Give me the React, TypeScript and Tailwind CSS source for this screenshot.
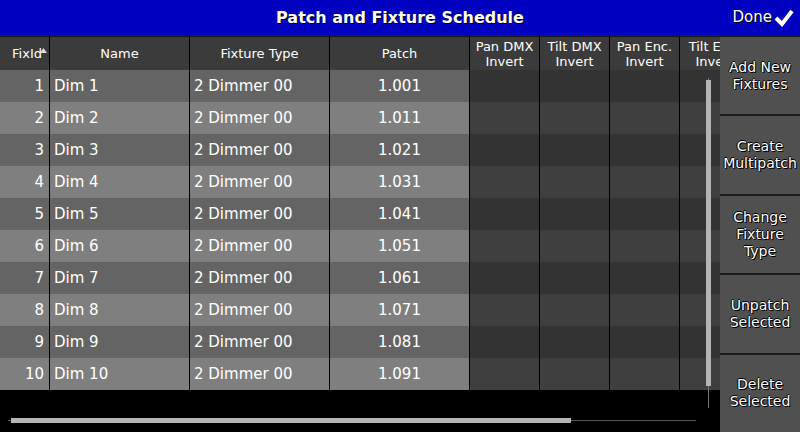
import React from 'react';

const rows = Array.from({ length: 10 }, (_, i) => ({
  id: i + 1,
  name: `Dim ${i + 1}`,
  type: '2 Dimmer 00',
  patch: `1.${String(i * 10 + 1).padStart(3, '0')}`,
}));

const buttons = [
  ['Add New', 'Fixtures'],
  ['Create', 'Multipatch'],
  ['Change', 'Fixture', 'Type'],
  ['Unpatch', 'Selected'],
  ['Delete', 'Selected'],
];

export default function App() {
  return (
    <div className="w-[800px] h-[432px] bg-black flex flex-col overflow-hidden text-white font-['DejaVu_Sans',sans-serif]">
      {/* Title bar */}
      <div className="h-[35px] bg-[#0000c0] flex items-center relative shrink-0">
        <div className="flex-1 text-center text-[16px] font-bold [text-shadow:1px_1px_0_#000]">
          Patch and Fixture Schedule
        </div>
        <div className="absolute right-[6px] top-0 h-full flex items-center gap-[2px] text-[15px] [text-shadow:1px_1px_0_#000]">
          <span>Done</span>
          <svg width="20" height="18" viewBox="0 0 20 18">
            <path d="M2 9 L8 15 L18 2" stroke="#fff" strokeWidth="4" fill="none" strokeLinejoin="miter" />
          </svg>
        </div>
      </div>
      <div className="h-[2px] bg-[#1a1a1a] shrink-0" />

      <div className="flex flex-1 min-h-0">
        {/* Table area */}
        <div className="w-[720px] flex flex-col relative overflow-hidden">
          {/* Header */}
          <div className="flex h-[33px] bg-[#3b3b3b] text-[13px] shrink-0">
            <div className="w-[50px] shrink-0 border-r border-black flex items-center justify-end pr-[7px] relative">
              FixId
              <svg className="absolute right-[2px] top-[11px]" width="7" height="5" viewBox="0 0 7 5">
                <path d="M0 5 L3.5 0 L7 5 Z" fill="#ddd" />
              </svg>
            </div>
            <div className="w-[140px] shrink-0 border-r border-black flex items-center justify-center">Name</div>
            <div className="w-[140px] shrink-0 border-r border-black flex items-center justify-center">Fixture Type</div>
            <div className="w-[140px] shrink-0 border-r border-black flex items-center justify-center">Patch</div>
            {['Pan DMX', 'Tilt DMX', 'Pan Enc.', 'Tilt Enc.'].map((h) => (
              <div key={h} className="w-[70px] shrink-0 border-r border-black flex flex-col items-center pt-[2px] leading-[15px] whitespace-nowrap">
                <span>{h}</span>
                <span>Invert</span>
              </div>
            ))}
          </div>

          {/* Rows */}
          {rows.map((r, i) => {
            const odd = i % 2 === 0;
            const light = odd ? 'bg-[#646464]' : 'bg-[#7f7f7f]';
            const dark = odd ? 'bg-[#333333]' : 'bg-[#3f3f3f]';
            return (
              <div key={r.id} className="flex h-[32px] text-[15px] shrink-0">
                <div className={`w-[50px] shrink-0 border-r border-black flex items-center justify-end pr-[5px] ${light}`}>{r.id}</div>
                <div className={`w-[140px] shrink-0 border-r border-black flex items-center pl-[4px] ${light}`}>{r.name}</div>
                <div className={`w-[140px] shrink-0 border-r border-black flex items-center pl-[4px] ${light}`}>{r.type}</div>
                <div className={`w-[140px] shrink-0 border-r border-black flex items-center justify-center ${light}`}>{r.patch}</div>
                {[0, 1, 2, 3].map((c) => (
                  <div key={c} className={`w-[70px] shrink-0 border-r border-black ${dark}`} />
                ))}
              </div>
            );
          })}

          {/* Horizontal scrollbar */}
          <div className="flex-1 flex items-end pb-[9px] pl-[8px]">
            <div className="w-[688px] h-[5px] relative flex items-center">
              <div className="absolute left-0 right-0 top-[2px] h-px bg-[#555]" />
              <div className="relative ml-[3px] w-[560px] h-[5px] bg-[#b4b4b4]" />
            </div>
          </div>

          {/* Vertical scrollbar overlay */}
          <div className="absolute left-[708px] top-[41px] w-px h-[330px] bg-[#777]" />
          <div className="absolute left-[706px] top-[43px] w-[5px] h-[306px] bg-[#b4b4b4]" />
        </div>

        {/* Right panel */}
        <div className="w-[80px] bg-[#505050] flex flex-col">
          {buttons.map((b, i) => (
            <div
              key={i}
              className={`flex-1 flex flex-col items-center justify-center text-[14px] leading-[17px] [text-shadow:1px_1px_0_#000,-1px_0_0_#000,0_-1px_0_#000] whitespace-nowrap ${i < buttons.length - 1 ? 'border-b-2 border-[#1c1c1c]' : ''}`}
            >
              {b.map((t) => (
                <span key={t}>{t}</span>
              ))}
            </div>
          ))}
        </div>
      </div>
    </div>
  );
}
